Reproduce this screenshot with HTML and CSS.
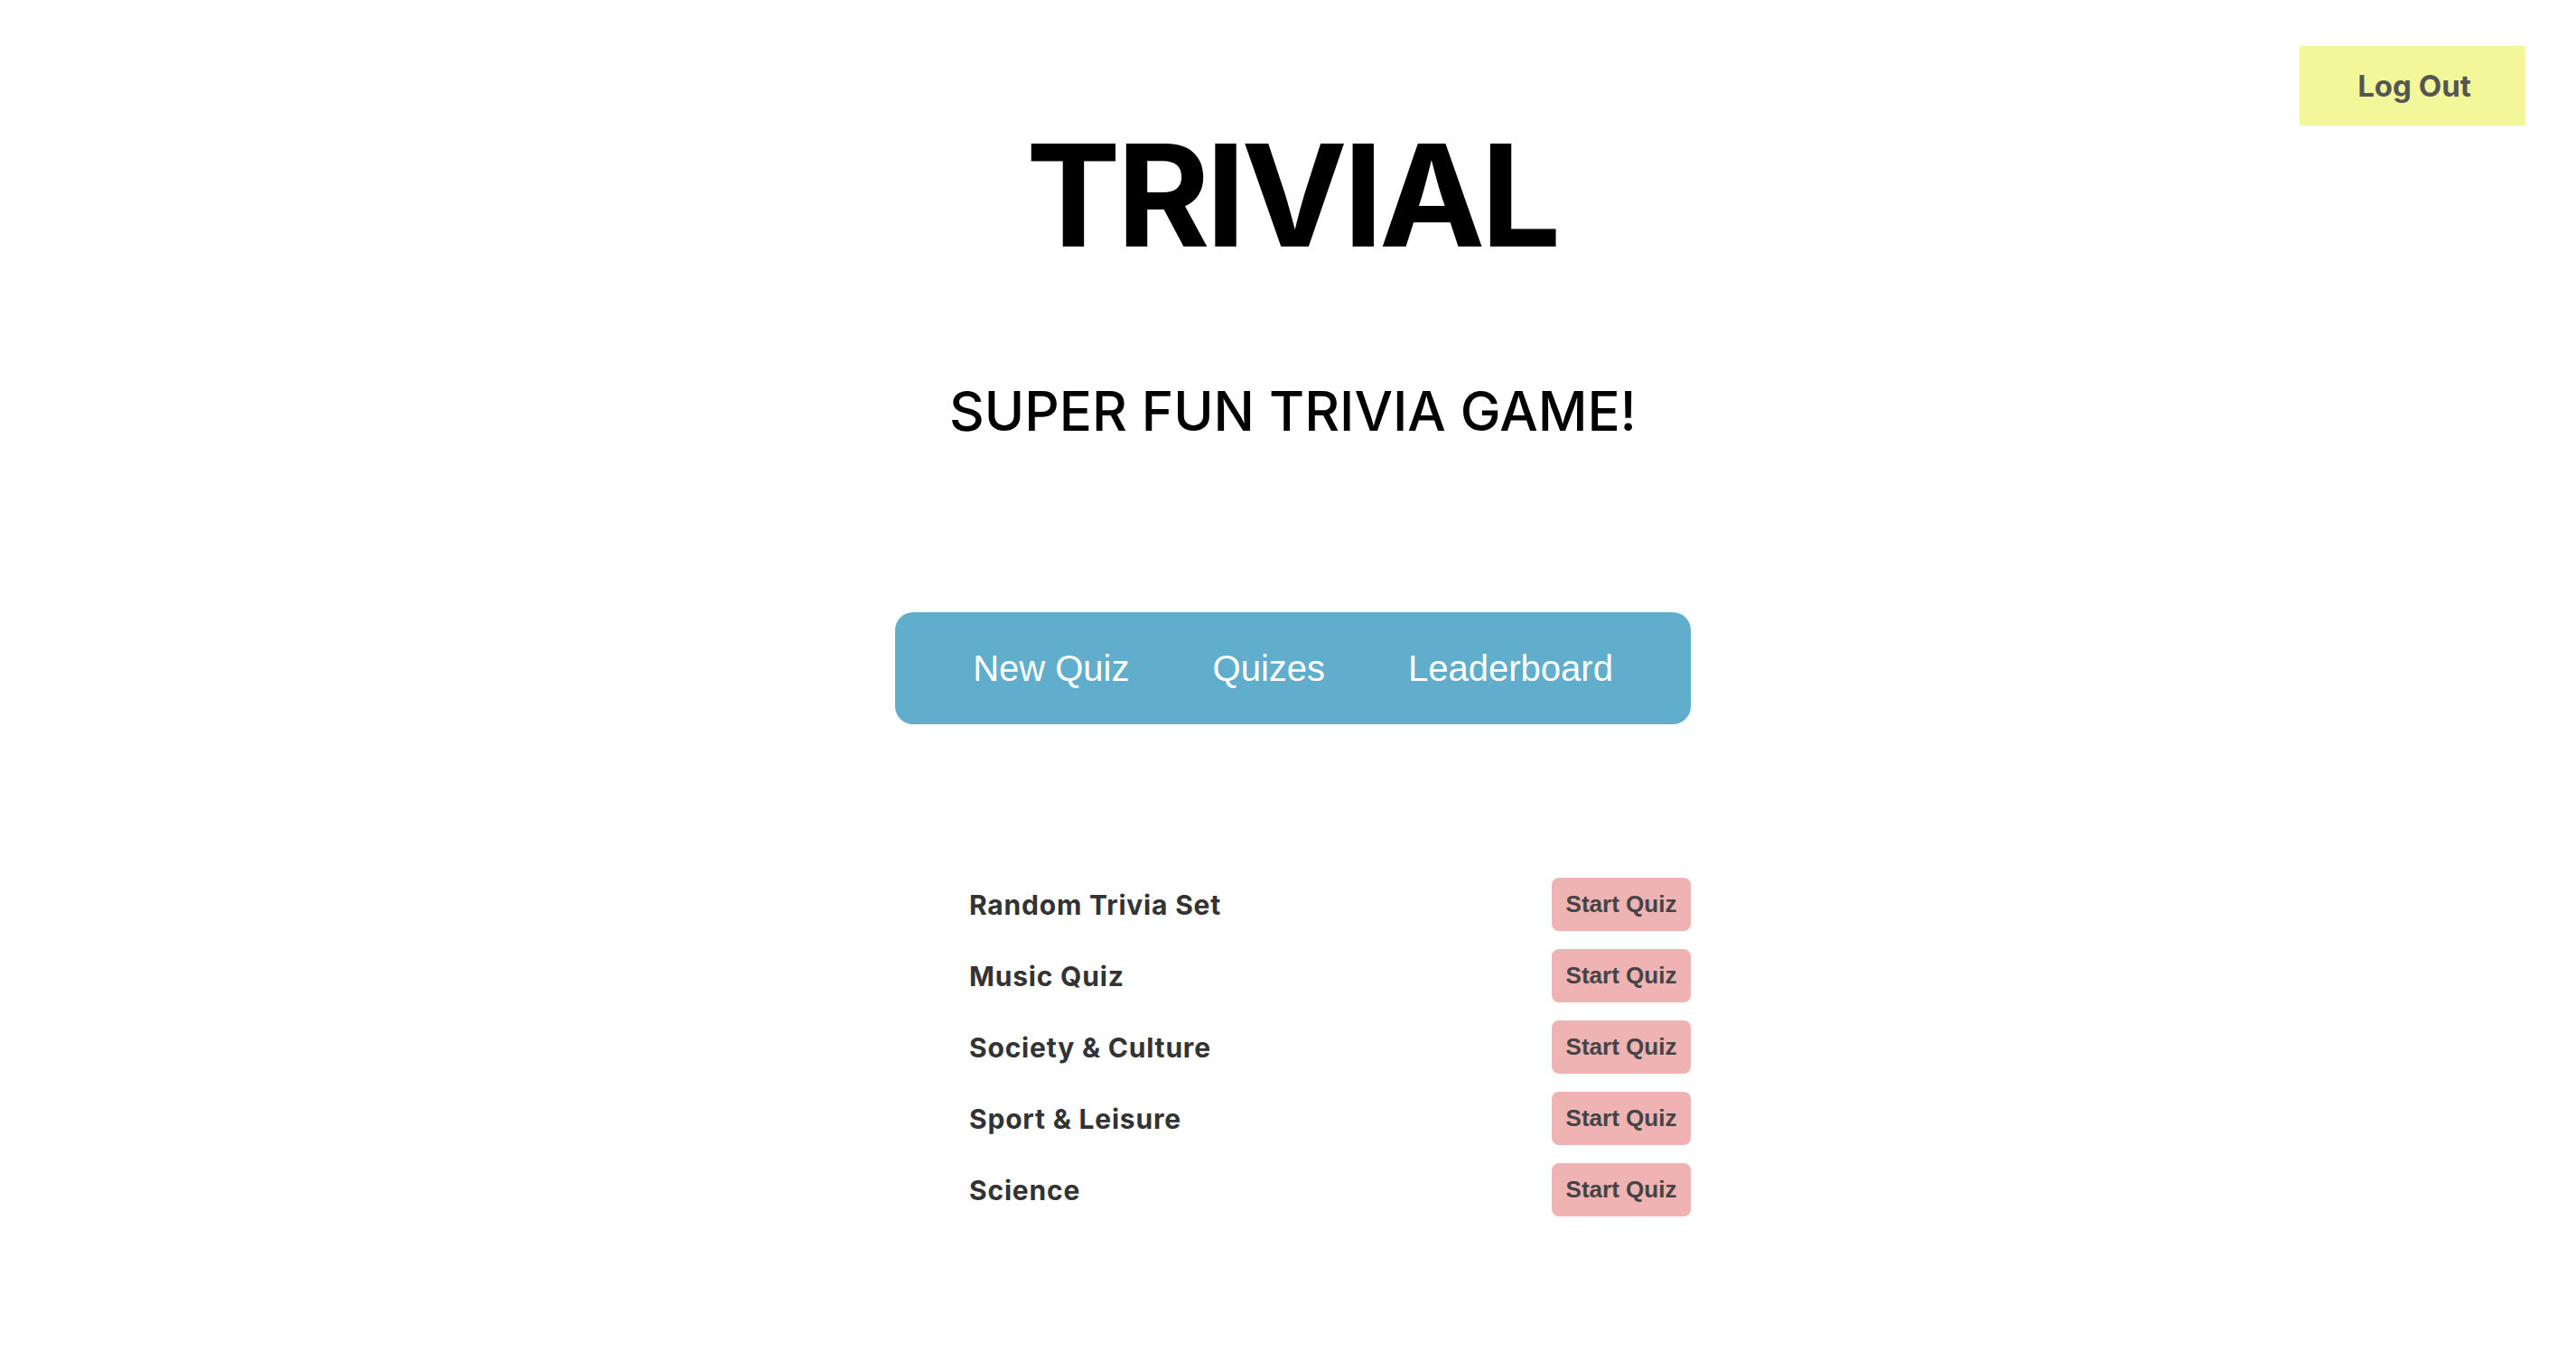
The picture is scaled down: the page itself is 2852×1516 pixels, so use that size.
FILE: index.html
```html
<!DOCTYPE html>
<html lang="en">
<head>
<meta charset="utf-8">
<title>Trivial</title>
<link rel="stylesheet" href="styles.css">
</head>
<body>
<button class="logout">Log Out</button>
<main class="page">
  <h1 class="title">TRIVIAL</h1>
  <h2 class="subtitle">SUPER FUN TRIVIA GAME!</h2>
  <nav class="nav">
    <a class="nav-link">New Quiz</a>
    <a class="nav-link">Quizes</a>
    <a class="nav-link">Leaderboard</a>
  </nav>
  <ul class="quiz-list">
    <li class="quiz-row"><span class="quiz-name">Random Trivia Set</span><button class="start">Start Quiz</button></li>
    <li class="quiz-row"><span class="quiz-name">Music Quiz</span><button class="start">Start Quiz</button></li>
    <li class="quiz-row"><span class="quiz-name">Society &amp; Culture</span><button class="start">Start Quiz</button></li>
    <li class="quiz-row"><span class="quiz-name">Sport &amp; Leisure</span><button class="start">Start Quiz</button></li>
    <li class="quiz-row"><span class="quiz-name">Science</span><button class="start">Start Quiz</button></li>
  </ul>
</main>
</body>
</html>
```
FILE: styles.css
```css
* { box-sizing: border-box; }
html, body { margin: 0; padding: 0; background: #fff; }
body { font-family: Inter, "Noto Sans", sans-serif; color: #000; }

.logout {
  position: absolute;
  top: 51px;
  right: 56px;
  width: 250px;
  height: 88px;
  border: none;
  border-radius: 2px;
  background: #f3f799;
  color: #555;
  font-family: Inter, sans-serif;
  font-weight: 700;
  font-size: 33px;
  padding: 0 0 0 4px;
}

.page {
  display: flex;
  flex-direction: column;
  align-items: center;
  padding-left: 11px;
}

.title {
  margin: 138px 0 0;
  font-size: 157px;
  line-height: 1;
  font-weight: 700;
  letter-spacing: -4.5px;
  text-indent: -3px;
}

.subtitle {
  margin: 130px 0 0;
  font-size: 60px;
  line-height: 1;
  font-weight: 500;
}

.nav {
  margin-top: 193px;
  width: 881px;
  height: 124px;
  background: #60aecc;
  border-radius: 20px;
  display: flex;
  align-items: center;
  justify-content: center;
  gap: 92px;
}

.nav-link {
  font-family: "Liberation Sans", Arial, sans-serif;
  font-size: 40px;
  color: #fff;
}

.quiz-list {
  list-style: none;
  margin: 170px 0 0;
  padding: 0 0 0 82px;
  width: 881px;
  display: flex;
  flex-direction: column;
  gap: 20px;
}

.quiz-row {
  display: flex;
  justify-content: space-between;
  align-items: center;
}

.quiz-name {
  font-family: Inter, sans-serif;
  font-weight: 700;
  font-size: 30px;
  letter-spacing: 0.8px;
  color: #333;
}

.start {
  height: 59px;
  width: 154px;
  padding: 0;
  border: none;
  border-radius: 8px;
  background: #efb3b3;
  color: #444;
  font-family: "Liberation Sans", Arial, sans-serif;
  font-weight: 700;
  font-size: 26px;
}
```
